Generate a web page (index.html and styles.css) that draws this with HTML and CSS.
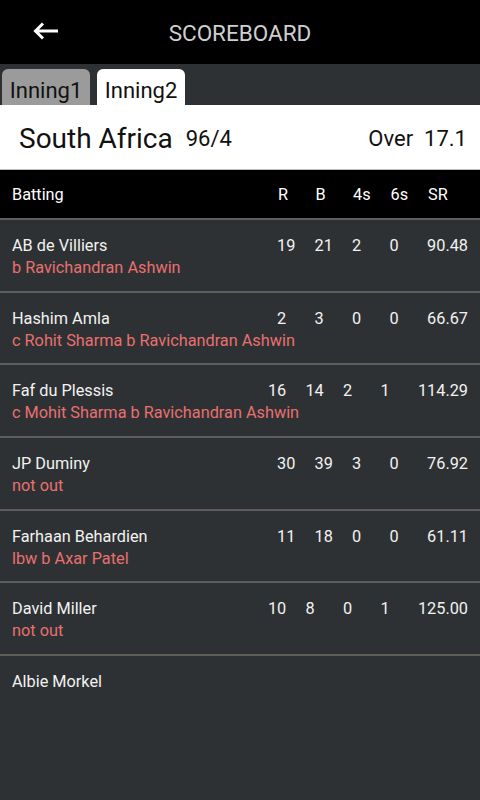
FILE: index.html
```html
<!DOCTYPE html>
<html>
<head>
<meta charset="utf-8">
<link rel="stylesheet" href="styles.css">
</head>
<body>
<div class="app">
  <header class="topbar">
    <svg class="back" width="26" height="18" viewBox="0 0 26 18">
      <path d="M25 9H3M10 1.5L2.5 9L10 16.5" fill="none" stroke="#fff" stroke-width="3" stroke-linecap="butt" stroke-linejoin="miter"/>
    </svg>
    <div class="title">SCOREBOARD</div>
  </header>
  <nav class="tabs">
    <div class="tab">Inning1</div>
    <div class="tab active">Inning2</div>
  </nav>
  <section class="team">
    <span class="tname">South Africa</span>
    <span class="score">96/4</span>
    <span class="spacer"></span>
    <span class="over">Over</span>
    <span class="overs">17.1</span>
  </section>
  <div class="thead">
    <span class="name">Batting</span>
    <div class="stats"><span class="c">R</span><span class="c">B</span><span class="c">4s</span><span class="c">6s</span><span class="sr">SR</span></div>
  </div>
  <div class="row">
    <div class="line"><span class="name">AB de Villiers</span><div class="stats"><span class="c">19</span><span class="c">21</span><span class="c">2</span><span class="c">0</span><span class="sr">90.48</span></div></div>
    <div class="how">b Ravichandran Ashwin</div>
  </div>
  <div class="row">
    <div class="line"><span class="name">Hashim Amla</span><div class="stats"><span class="c">2</span><span class="c">3</span><span class="c">0</span><span class="c">0</span><span class="sr">66.67</span></div></div>
    <div class="how">c Rohit Sharma b Ravichandran Ashwin</div>
  </div>
  <div class="row">
    <div class="line"><span class="name">Faf du Plessis</span><div class="stats"><span class="c">16</span><span class="c">14</span><span class="c">2</span><span class="c">1</span><span class="sr">114.29</span></div></div>
    <div class="how">c Mohit Sharma b Ravichandran Ashwin</div>
  </div>
  <div class="row">
    <div class="line"><span class="name">JP Duminy</span><div class="stats"><span class="c">30</span><span class="c">39</span><span class="c">3</span><span class="c">0</span><span class="sr">76.92</span></div></div>
    <div class="how">not out</div>
  </div>
  <div class="row">
    <div class="line"><span class="name">Farhaan Behardien</span><div class="stats"><span class="c">11</span><span class="c">18</span><span class="c">0</span><span class="c">0</span><span class="sr">61.11</span></div></div>
    <div class="how">lbw b Axar Patel</div>
  </div>
  <div class="row">
    <div class="line"><span class="name">David Miller</span><div class="stats"><span class="c">10</span><span class="c">8</span><span class="c">0</span><span class="c">1</span><span class="sr">125.00</span></div></div>
    <div class="how">not out</div>
  </div>
  <div class="row last">
    <div class="line"><span class="name">Albie Morkel</span></div>
  </div>
</div>
</body>
</html>
```
FILE: styles.css
```css
* { box-sizing: border-box; }
html, body { margin: 0; padding: 0; }
body {
  width: 480px;
  height: 800px;
  background: #2e3133;
  font-family: Roboto, "Liberation Sans", sans-serif;
  overflow: hidden;
}
.app { width: 480px; min-height: 800px; background: #2e3133; }

.topbar {
  height: 64px;
  background: #000;
  display: flex;
  align-items: center;
  justify-content: center;
  position: relative;
}
.back { position: absolute; left: 33px; top: 22px; }
.title {
  color: #cfcfcf;
  font-size: 22.5px;
  padding-top: 2px;
}

.tabs {
  height: 41px;
  display: flex;
  align-items: flex-end;
  gap: 7px;
  padding-left: 2px;
  background: #2e3133;
}
.tab {
  width: 88px;
  height: 36px;
  padding-top: 9px;
  text-align: center;
  font-size: 22px;
  line-height: 26px;
  color: #111;
  background: #9b9b9b;
  border-radius: 6px 6px 0 0;
}
.tab.active { background: #fff; }

.team {
  height: 65px;
  background: #fff;
  border-bottom: 1px solid #bdbdbd;
  display: flex;
  align-items: center;
  padding: 2px 13px 0 19px;
  color: #111;
}
.tname { font-size: 28px; }
.score { font-size: 22px; margin-left: 13px; }
.spacer { flex: 1; }
.over { font-size: 22px; margin-right: 11px; }
.overs { font-size: 22px; }

.thead {
  height: 50px;
  background: #000;
  border-bottom: 2px solid #5f5d59;
  display: flex;
  align-items: center;
  padding: 1px 12px 0 12px;
  color: #fff;
  font-size: 16.3px;
}
.name { flex: 1; }
.stats { display: flex; }
.c { width: 37.5px; }
.sr { min-width: 40px; }

.row {
  height: 72.67px;
  border-bottom: 2px solid #5f5d59;
  padding: 15px 12px 0 12px;
  font-size: 16.3px;
  line-height: 22px;
}
.row.last { border-bottom: none; }
.line { display: flex; color: #f2f2f2; }
.how { color: #e8706f; white-space: nowrap; }
```
